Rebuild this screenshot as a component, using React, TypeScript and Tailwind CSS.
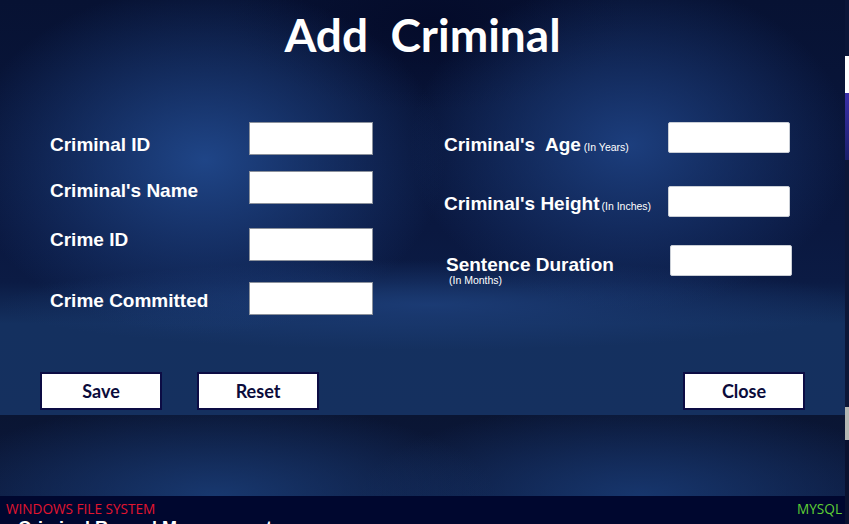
import React from 'react'

const label = "font-['Liberation_Sans',Arial,sans-serif] font-bold text-[19px] leading-[20px] text-white whitespace-pre"
const hint = "font-['Liberation_Sans',Arial,sans-serif] font-normal text-[10.5px] text-white"
const field = "bg-white border border-[#8b919c] h-[33px] w-[124px]"
const fieldR = "bg-white border border-[#c9ced6] rounded-[2px] h-[31px] w-[122px]"
const btn = "h-[38px] w-[122px] bg-white border-2 border-[#0c0c44] flex items-center justify-center font-['Lato',sans-serif] font-bold text-[18px] text-[#0b0b3b]"

export default function App() {
  return (
    <div className="flex w-[849px] h-[524px] overflow-hidden bg-[#0c1738]">
      <div className="flex flex-col w-[845px] shrink-0">
        {/* main form panel */}
        <div className="h-[415px] flex flex-col bg-[radial-gradient(ellipse_240px_175px_at_205px_160px,#1f4587_0%,transparent_100%),radial-gradient(ellipse_220px_165px_at_630px_145px,#1c3e7d_0%,transparent_100%),radial-gradient(ellipse_430px_45px_at_430px_305px,#1b3b74_0%,transparent_100%),radial-gradient(ellipse_200px_90px_at_430px_20px,#040b2a_0%,transparent_100%),linear-gradient(to_bottom,#071233_0%,#0a1840_55%,#0b1b44_68%,#14305f_78%,#15305f_100%)]">
          <div className="pt-[7px] text-center font-['Lato',sans-serif] font-bold text-[46px] leading-[55px] text-white whitespace-pre">
            Add  Criminal
          </div>

          <div className="flex items-start mt-[60px] pl-[50px]">
            {/* left column */}
            <div className="flex flex-col">
              <div className="flex">
                <div className={`${label} w-[199px] pt-[13px]`}>Criminal ID</div>
                <div className={field} />
              </div>
              <div className="flex mt-[16px]">
                <div className={`${label} w-[199px] pt-[10px]`}>Criminal's Name</div>
                <div className={field} />
              </div>
              <div className="flex mt-[24px]">
                <div className={`${label} w-[199px] pt-[2px]`}>Crime ID</div>
                <div className={field} />
              </div>
              <div className="flex mt-[21px]">
                <div className={`${label} w-[199px] pt-[9px]`}>Crime Committed</div>
                <div className={field} />
              </div>
            </div>

            {/* right column */}
            <div className="flex flex-col ml-[71px]">
              <div className="flex h-[31px]">
                <div className={`${label} w-[224px] pt-[13px]`}>
                  Criminal's  Age<span className={`${hint} ml-[3px]`}>(In Years)</span>
                </div>
                <div className={fieldR} />
              </div>
              <div className="flex mt-[33px]">
                <div className={`${label} w-[224px] pt-[8px]`}>
                  Criminal's Height<span className={`${hint} ml-[2px]`}>(In Inches)</span>
                </div>
                <div className={fieldR} />
              </div>
              <div className="flex mt-[28px]">
                <div className="w-[226px] pl-[2px] pt-[10px] flex flex-col">
                  <div className={label}>Sentence Duration</div>
                  <div className={`${hint} leading-[11px] pl-[3px]`}>(In Months)</div>
                </div>
                <div className={fieldR} />
              </div>
            </div>
          </div>

          <div className="flex mt-[57px] pl-[40px] pr-[40px]">
            <button className={btn}>Save</button>
            <button className={`${btn} ml-[35px]`}>Reset</button>
            <button className={`${btn} ml-auto`}>Close</button>
          </div>
        </div>

        {/* lower panel */}
        <div className="h-[81px] bg-[radial-gradient(ellipse_280px_95px_at_215px_100%,#18386f_0%,transparent_100%),radial-gradient(ellipse_280px_95px_at_640px_100%,#17366d_0%,transparent_100%),linear-gradient(to_bottom,#0a1533,#0c1a3e)]" />

        {/* status bar */}
        <div className="h-[28px] bg-[#00072f] overflow-hidden">
          <div className="flex justify-between pt-[4px] pl-[6px] pr-[3px] font-['Open_Sans',sans-serif] text-[13.6px] leading-[18px]">
            <span className="text-[#e3152f]">WINDOWS FILE SYSTEM</span>
            <span className="text-[#5fcf35]">MYSQL</span>
          </div>
          <div className="pl-[18px] font-['Liberation_Sans',Arial,sans-serif] font-bold text-[18px] leading-[20px] text-white">
            Criminal Record Management
          </div>
        </div>
      </div>

      {/* window behind, right edge */}
      <div className="flex flex-col w-[4px] h-full">
        <div className="h-[56px] bg-[#0b1638]" />
        <div className="h-[37px] bg-white" />
        <div className="h-[67px] bg-[linear-gradient(to_bottom,#3a30a8,#1a1f6a)]" />
        <div className="h-[247px] bg-[#0c1738]" />
        <div className="h-[33px] bg-[#b4b8b4]" />
        <div className="flex-1 bg-[#0a1230]" />
      </div>
    </div>
  )
}
